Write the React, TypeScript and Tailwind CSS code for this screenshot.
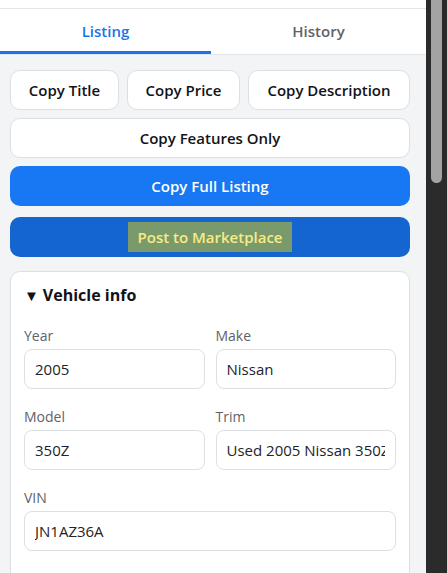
import type { ReactElement } from 'react';

const font = { fontFamily: '"Open Sans", "Noto Sans", sans-serif' };

function Field({ label, value }: { label: string; value: string }): ReactElement {
  return (
    <label className="flex min-w-0 flex-col">
      <span className="mb-[4px] text-[14px] leading-[18px] text-[#5f6368]">{label}</span>
      <input
        readOnly
        value={value}
        className="h-10 w-full min-w-0 rounded-lg border border-[#dcdfe3] bg-white px-[10px] text-[15px] text-[#1f2328] outline-none"
      />
    </label>
  );
}

export default function App(): ReactElement {
  return (
    <div className="flex h-[573px] w-[447px] overflow-hidden bg-[#f3f4f6]" style={font}>
      <div className="flex w-[426px] flex-col">
        <div className="h-[9px] shrink-0 border-b border-[#e3e5e8] bg-white" />
        <div className="flex h-[46px] shrink-0 border-b border-[#e3e5e8] bg-white">
          <button className="w-[211px] border-b-[3px] border-[#1a73e8] pt-[3px] text-[15px] font-semibold text-[#1a73e8]">
            Listing
          </button>
          <button className="flex-1 border-b-[3px] border-transparent pt-[3px] text-[15px] font-semibold text-[#5f6368]">
            History
          </button>
        </div>

        <div className="flex flex-col pt-[15px] pr-4 pl-[10px]">
          <div className="flex gap-2">
            <button className="h-10 w-[109px] rounded-[10px] border border-[#dcdfe3] bg-white text-[15px] font-semibold text-[#111318]">
              Copy Title
            </button>
            <button className="h-10 w-[113px] rounded-[10px] border border-[#dcdfe3] bg-white text-[15px] font-semibold text-[#111318]">
              Copy Price
            </button>
            <button className="h-10 flex-1 rounded-[10px] border border-[#dcdfe3] bg-white text-[15px] font-semibold text-[#111318]">
              Copy Description
            </button>
          </div>
          <button className="mt-2 h-10 rounded-[10px] border border-[#dcdfe3] bg-white text-[15px] font-semibold text-[#111318]">
            Copy Features Only
          </button>
          <button className="mt-2 h-10 rounded-[10px] bg-[#1877f2] text-[15px] font-semibold text-white">
            Copy Full Listing
          </button>
          <button className="mt-[11px] flex h-10 items-center justify-center rounded-[10px] bg-[#1565d0] text-[15px] font-semibold">
            <span className="bg-[#7a9a6c] px-[10px] py-[4px] text-[#f6ec86]">Post to Marketplace</span>
          </button>

          <div className="mt-[14px] rounded-[10px] border border-[#dcdfe3] bg-white px-[13px] pt-[11px] pb-6">
            <div className="flex items-center gap-[4px] text-[16px] font-bold text-[#111318]">
              <span className="text-[15px] leading-none">▼</span>
              <span>Vehicle info</span>
            </div>
            <div className="mt-[20px] grid grid-cols-2 gap-x-[11px] gap-y-[19px]">
              <Field label="Year" value="2005" />
              <Field label="Make" value="Nissan" />
              <Field label="Model" value="350Z" />
              <Field label="Trim" value="Used 2005 Nissan 350Z Base" />
              <div className="col-span-2">
                <Field label="VIN" value="JN1AZ36A" />
              </div>
              <Field label="Mileage" value="" />
              <Field label="Price" value="" />
            </div>
          </div>
        </div>
      </div>
      <div className="flex w-[21px] justify-center bg-[#2b2b2b]">
        <div className="h-[183px] w-[11px] rounded-b-full bg-[#a3a3a3]" />
      </div>
    </div>
  );
}
